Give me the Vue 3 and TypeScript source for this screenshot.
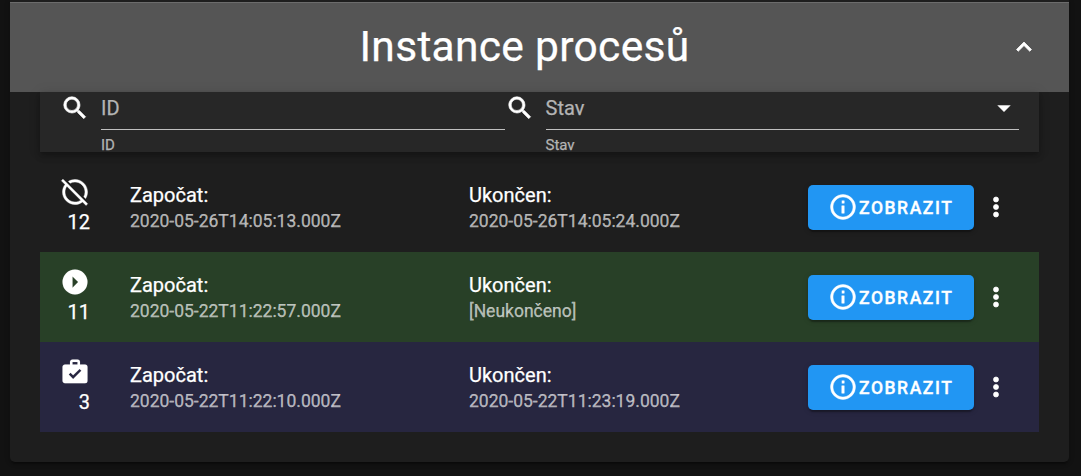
<script setup lang="ts">
type State = 'terminated' | 'running' | 'finished'

interface ProcessInstance {
  id: number
  state: State
  started: string
  ended: string
}

const instances: ProcessInstance[] = [
  { id: 12, state: 'terminated', started: '2020-05-26T14:05:13.000Z', ended: '2020-05-26T14:05:24.000Z' },
  { id: 11, state: 'running', started: '2020-05-22T11:22:57.000Z', ended: '[Neukončeno]' },
  { id: 3, state: 'finished', started: '2020-05-22T11:22:10.000Z', ended: '2020-05-22T11:23:19.000Z' },
]

const magnify =
  'M9.5,3A6.5,6.5 0 0,1 16,9.5C16,11.11 15.41,12.59 14.44,13.73L14.71,14H15.5L20.5,19L19,20.5L14,15.5V14.71L13.73,14.44C12.59,15.41 11.11,16 9.5,16A6.5,6.5 0 0,1 3,9.5A6.5,6.5 0 0,1 9.5,3M9.5,5C7,5 5,7 5,9.5C5,12 7,14 9.5,14C12,14 14,12 14,9.5C14,7 12,5 9.5,5Z'

const stateIcons: Record<State, string> = {
  terminated:
    'M22.11 21.46L2.39 1.73L1.11 3L4.06 5.95C2.78 7.63 2 9.72 2 12C2 17.5 6.5 22 12 22C14.28 22 16.37 21.23 18.05 19.94L20.84 22.73L22.11 21.46M12 20C7.58 20 4 16.42 4 12C4 10.27 4.56 8.68 5.5 7.38L16.62 18.5C15.32 19.45 13.73 20 12 20M8.17 4.97L6.72 3.5C8.25 2.56 10.06 2 12 2C17.5 2 22 6.5 22 12C22 13.94 21.44 15.75 20.5 17.28L19.03 15.83C19.65 14.69 20 13.39 20 12C20 7.58 16.42 4 12 4C10.61 4 9.31 4.35 8.17 4.97Z',
  running: 'M12 2A10 10 0 0 0 2 12A10 10 0 0 0 12 22A10 10 0 0 0 22 12A10 10 0 0 0 12 2M10 16.5V7.5L14.5 12Z',
  finished:
    'M10,2H14A2,2 0 0,1 16,4V6H20A2,2 0 0,1 22,8V19A2,2 0 0,1 20,21H4C2.89,21 2,20.1 2,19V8C2,6.89 2.89,6 4,6H8V4C8,2.89 8.89,2 10,2M14,6V4H10V6H14M10.5,17.5L17.09,10.91L15.68,9.5L10.5,14.67L8.41,12.59L7,14L10.5,17.5Z',
}
</script>

<template>
  <main class="page">
    <section class="card">
      <header class="card-header">
        <h1>Instance procesů</h1>
        <svg class="icon" viewBox="0 0 24 24"><path d="M7.41,15.41L12,10.83L16.59,15.41L18,14L12,8L6,14L7.41,15.41Z" /></svg>
      </header>
      <div class="content">
        <div class="filters">
          <div class="field">
            <svg class="icon search" viewBox="0 0 24 24"><path :d="magnify" /></svg>
            <div class="control">
              <div class="input"><span>ID</span></div>
              <small>ID</small>
            </div>
          </div>
          <div class="field">
            <svg class="icon search" viewBox="0 0 24 24"><path :d="magnify" /></svg>
            <div class="control">
              <div class="input">
                <span>Stav</span>
                <svg class="icon" viewBox="0 0 24 24"><path d="M7,10L12,15L17,10H7Z" /></svg>
              </div>
              <small>Stav</small>
            </div>
          </div>
        </div>
        <ul class="list">
          <li v-for="item in instances" :key="item.id" class="row" :class="item.state">
            <div class="badge">
              <svg class="icon" viewBox="0 0 24 24"><path :d="stateIcons[item.state]" /></svg>
              <span>{{ item.id }}</span>
            </div>
            <div class="cell">
              <div class="label">Započat:</div>
              <div class="value">{{ item.started }}</div>
            </div>
            <div class="cell">
              <div class="label">Ukončen:</div>
              <div class="value">{{ item.ended }}</div>
            </div>
            <button class="show" type="button">
              <svg class="icon" viewBox="0 0 24 24"><path d="M11,9H13V7H11M12,20C7.59,20 4,16.41 4,12C4,7.59 7.59,4 12,4C16.41,4 20,7.59 20,12C20,16.41 16.41,20 12,20M12,2A10,10 0 0,0 2,12A10,10 0 0,0 12,22A10,10 0 0,0 22,12A10,10 0 0,0 12,2M11,17H13V11H11V17Z" /></svg>
              <span>ZOBRAZIT</span>
            </button>
            <svg class="icon more" viewBox="0 0 24 24"><path d="M12,16A2,2 0 0,1 14,18A2,2 0 0,1 12,20A2,2 0 0,1 10,18A2,2 0 0,1 12,16M12,10A2,2 0 0,1 14,12A2,2 0 0,1 12,14A2,2 0 0,1 10,12A2,2 0 0,1 12,10M12,4A2,2 0 0,1 14,6A2,2 0 0,1 12,8A2,2 0 0,1 10,6A2,2 0 0,1 12,4Z" /></svg>
          </li>
        </ul>
      </div>
    </section>
  </main>
</template>

<style>
body {
  background: #121212;
  overflow: hidden;
}
</style>

<style scoped>
.page {
  box-sizing: border-box;
  height: 476px;
  padding: 0 12px 14px 10px;
  background: #121212;
  color: #fff;
  font-family: Roboto, "Liberation Sans", sans-serif;
  font-size: 20px;
  -webkit-text-stroke: 0.25px currentColor;
}
.card {
  box-sizing: border-box;
  height: 462px;
  padding-top: 2px;
  background: #1e1e1e;
  border-radius: 0 0 5px 5px;
  box-shadow: 0 4px 1px -2px rgba(0, 0, 0, 0.2), 0 2px 2px rgba(0, 0, 0, 0.14), 0 1px 6px rgba(0, 0, 0, 0.12);
}
.icon {
  display: block;
  flex: none;
  width: 30px;
  height: 30px;
  fill: currentColor;
  stroke: currentColor;
  stroke-width: 0.35;
}
.search {
  margin-top: 0.5px;
  stroke-width: 0.5;
}
.card-header {
  box-sizing: border-box;
  display: flex;
  align-items: center;
  height: 90px;
  padding: 0 30px 2px;
  border-top: 1px solid #6c6c6c;
  background: #555;
}
.card-header .icon {
  stroke-width: 0.6;
}
.card-header h1 {
  flex: 1;
  margin: 0;
  text-align: center;
  font-size: 42.5px;
  font-weight: 400;
  line-height: 50px;
  letter-spacing: 0.31px;
}
.content {
  padding: 0 30px;
}
.filters {
  box-sizing: border-box;
  display: flex;
  height: 60px;
  padding: 0 20px;
  background: #272727;
  box-shadow: 0 2px 5px -1px rgba(0, 0, 0, 0.2), 0 5px 6px rgba(0, 0, 0, 0.14), 0 1px 12px rgba(0, 0, 0, 0.12);
}
.field {
  display: flex;
  flex: 0 0 445px;
  gap: 11px;
}
.field + .field {
  flex: 1;
  margin-left: -0.5px;
}
.control {
  flex: 1;
}
.input {
  box-sizing: border-box;
  display: flex;
  align-items: center;
  justify-content: space-between;
  height: 38px;
  padding-bottom: 5px;
  border-bottom: 1px solid #c0c0c0;
}
.input span,
.control small {
  color: #b4b4b4;
}
.control small {
  display: block;
  margin-top: 8px;
  font-size: 15px;
  line-height: 15px;
}
.list {
  margin: 10px 0 0;
  padding: 0;
  list-style: none;
}
.row {
  box-sizing: border-box;
  display: flex;
  align-items: center;
  height: 90px;
  padding: 0 27px 0 20px;
}
.running {
  background: #284027;
}
.finished {
  background: #272640;
}
.badge {
  width: 30px;
  margin-right: 40px;
}
.running .badge .icon,
.finished .badge .icon {
  stroke-width: 0.1;
}
.badge span {
  display: block;
  line-height: 30px;
  text-align: right;
}
.cell {
  flex: 0 0 339px;
}
.label {
  line-height: 24px;
}
.value {
  margin-top: 4px;
  color: rgba(255, 255, 255, 0.65);
  font-size: 17.5px;
  line-height: 21px;
}
.show {
  box-sizing: border-box;
  display: flex;
  align-items: center;
  width: 166px;
  height: 45px;
  padding: 0 20px;
  border: 0;
  border-radius: 5px;
  background: #2196f3;
  box-shadow: 0 4px 1px -2px rgba(0, 0, 0, 0.2), 0 2px 2px rgba(0, 0, 0, 0.14), 0 1px 6px rgba(0, 0, 0, 0.12);
  color: #fff;
  font: 500 17.5px Roboto, "Liberation Sans", sans-serif;
  letter-spacing: 1.56px;
  -webkit-text-stroke: 0.35px currentColor;
}
.show span {
  padding: 1px 0 0 1px;
}
.more {
  margin-left: 7.4px;
  stroke-width: 0.6;
}
</style>
